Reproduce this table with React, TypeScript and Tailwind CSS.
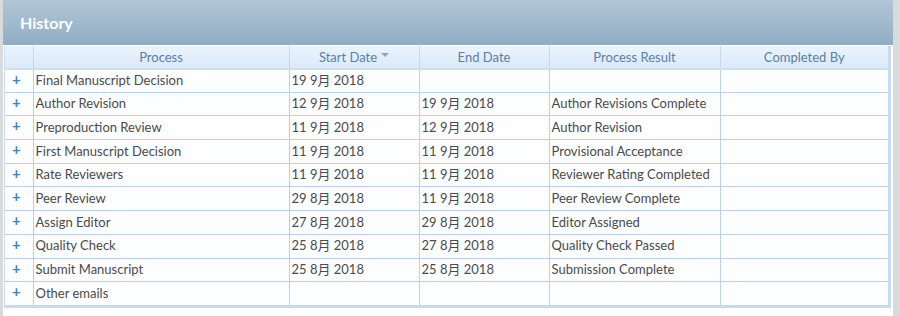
import React from "react";

const rows = [
  ["Final Manuscript Decision", "19 9月 2018", "", ""],
  ["Author Revision", "12 9月 2018", "19 9月 2018", "Author Revisions Complete"],
  ["Preproduction Review", "11 9月 2018", "12 9月 2018", "Author Revision"],
  ["First Manuscript Decision", "11 9月 2018", "11 9月 2018", "Provisional Acceptance"],
  ["Rate Reviewers", "11 9月 2018", "11 9月 2018", "Reviewer Rating Completed"],
  ["Peer Review", "29 8月 2018", "11 9月 2018", "Peer Review Complete"],
  ["Assign Editor", "27 8月 2018", "29 8月 2018", "Editor Assigned"],
  ["Quality Check", "25 8月 2018", "27 8月 2018", "Quality Check Passed"],
  ["Submit Manuscript", "25 8月 2018", "25 8月 2018", "Submission Complete"],
  ["Other emails", "", "", ""],
];

const font = { fontFamily: '"Lato", "Noto Sans CJK SC", sans-serif' };

export default function App() {
  return (
    <div className="w-[900px] h-[316px] bg-[#d9dadb] flex" style={font}>
      <div className="ml-[3px] w-[890px] h-full bg-white flex flex-col">
        {/* Panel title */}
        <div className="h-[45px] shrink-0 bg-gradient-to-b from-[#b1c6d6] to-[#90adc4] flex items-center px-[17px]">
          <h2 className="text-white font-bold text-[16px]">History</h2>
        </div>

        {/* History grid */}
        <div className="mt-[1px] ml-[1px] mr-[2px] border-r-[3px] border-b-[3px] border-l-[1px] border-[#c6dbee]">
          <table className="w-full border-collapse table-fixed text-[13px]">
            <colgroup>
              <col className="w-[28px]" />
              <col className="w-[256px]" />
              <col className="w-[130px]" />
              <col className="w-[130px]" />
              <col className="w-[171px]" />
              <col />
            </colgroup>
            <thead>
              <tr className="h-[22px] bg-gradient-to-b from-[#eaf4fd] to-[#dae9f8] text-[#5a80a8]">
                <th className="border-r border-[#c6dbee] border-b-2 border-b-[#cfdff0]"></th>
                <th className="font-normal pt-[2px] border-r border-[#c6dbee] border-b-2 border-b-[#cfdff0]">Process</th>
                <th className="font-normal pt-[2px] border-r border-[#c6dbee] border-b-2 border-b-[#cfdff0]">
                  <span className="inline-flex items-center gap-[4px]">
                    Start Date
                    <svg width="8" height="8" viewBox="0 0 8 8" className="-mt-[6px]">
                      <path d="M0 2 L8 2 L4 6 Z" fill="#7fa9d3" />
                    </svg>
                  </span>
                </th>
                <th className="font-normal pt-[2px] border-r border-[#c6dbee] border-b-2 border-b-[#cfdff0]">End Date</th>
                <th className="font-normal pt-[2px] border-r border-[#c6dbee] border-b-2 border-b-[#cfdff0]">Process Result</th>
                <th className="font-normal pt-[2px] border-b-2 border-b-[#cfdff0]">Completed By</th>
              </tr>
            </thead>
            <tbody className="bg-[#fcfeff] text-[#4a4a4a]">
              {rows.map((r, i) => (
                <tr key={i} className="h-[23.7px] border-b border-[#b9d1e8] last:border-b-0">
                  <td className="border-r border-[#b9d1e8] pl-[7px] align-top">
                    <span className="text-[#3b84c9] font-bold text-[15px] leading-[18px]">+</span>
                  </td>
                  <td className="border-r border-[#b9d1e8] px-[2px] whitespace-nowrap">{r[0]}</td>
                  <td className="border-r border-[#b9d1e8] px-[2px] whitespace-nowrap">{r[1]}</td>
                  <td className="border-r border-[#b9d1e8] px-[2px] whitespace-nowrap">{r[2]}</td>
                  <td className="border-r border-[#b9d1e8] px-[2px] whitespace-nowrap">{r[3]}</td>
                  <td></td>
                </tr>
              ))}
            </tbody>
          </table>
        </div>
      </div>
    </div>
  );
}
